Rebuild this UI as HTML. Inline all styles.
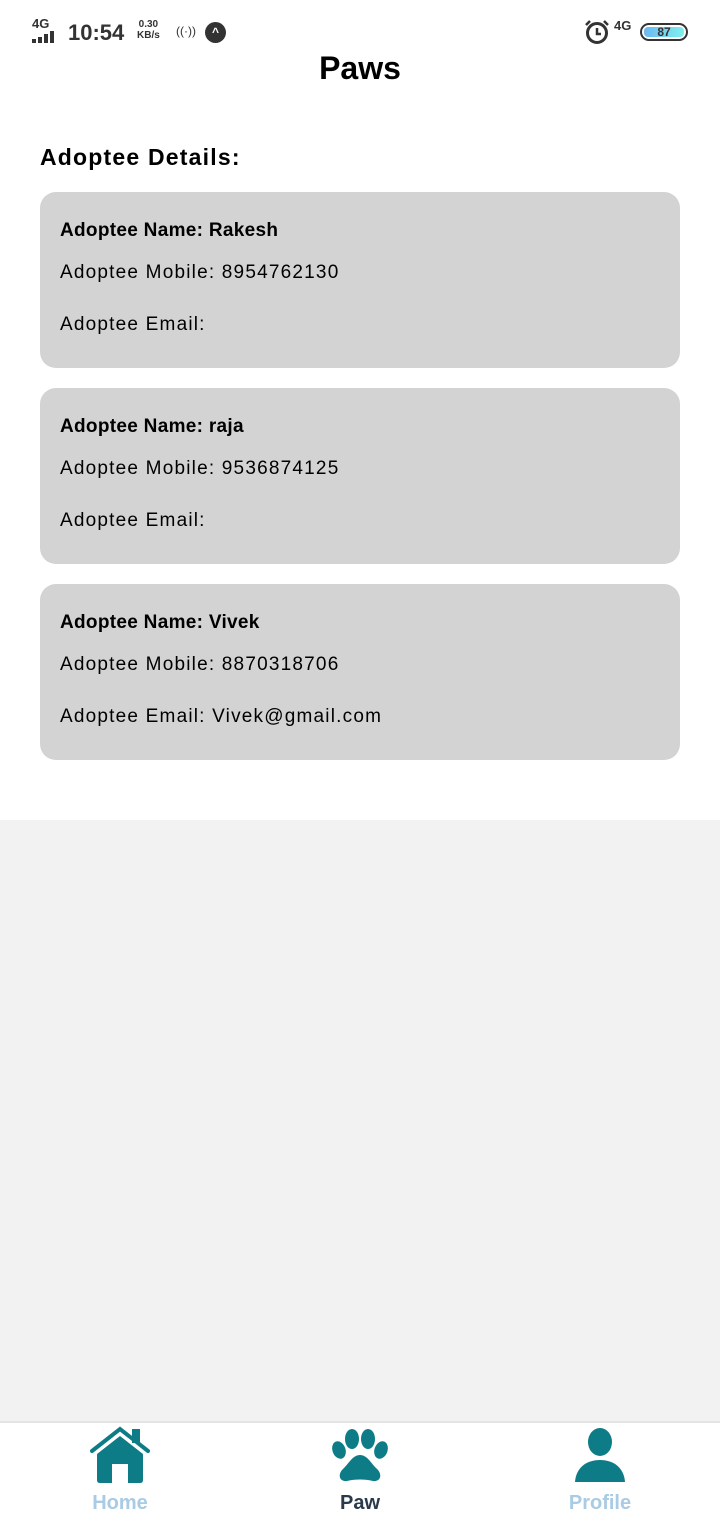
<!DOCTYPE html>
<html><head><meta charset="utf-8"><style>
*{margin:0;padding:0;box-sizing:border-box}
body{width:720px;height:1520px;position:relative;background:#fff;font-family:"Liberation Sans",sans-serif;overflow:hidden}
.abs{position:absolute}
.card{position:absolute;left:40px;width:640px;height:176px;background:#d3d3d3;border-radius:16px}
.card div{position:absolute;left:20px;font-size:19px;color:#000;letter-spacing:1.2px}
.card div.b{font-weight:bold;letter-spacing:0.3px}
</style></head><body>
<div class="abs" style="left:32px;top:16px;font-size:13px;font-weight:bold;color:#333">4G</div>
<div class="abs" style="left:32px;top:31px;width:26px;height:12px">
<span class="abs" style="left:0;top:8px;width:4px;height:4px;background:#333"></span>
<span class="abs" style="left:6px;top:6px;width:4px;height:6px;background:#333"></span>
<span class="abs" style="left:12px;top:3px;width:4px;height:9px;background:#333"></span>
<span class="abs" style="left:18px;top:0;width:4px;height:12px;background:#333"></span></div>
<div class="abs" style="left:68px;top:20px;font-size:22px;font-weight:bold;color:#333">10:54</div>
<div class="abs" style="left:137px;top:19px;font-size:10px;font-weight:bold;color:#333;line-height:11px;text-align:center">0.30<br>KB/s</div>
<div class="abs" style="left:176px;top:24px;font-size:12px;color:#333">((·))</div>
<div class="abs" style="left:205px;top:22px;width:21px;height:21px;border-radius:50%;background:#333;color:#fff;font-size:12px;text-align:center;line-height:21px;font-weight:bold">^</div>
<svg class="abs" style="left:584px;top:19px" width="26" height="26" viewBox="0 0 26 26"><circle cx="13" cy="14" r="9.5" stroke="#333" stroke-width="3" fill="none"/><path d="M13 9V15H17" stroke="#333" stroke-width="2.5" fill="none"/><path d="M2 6L6 2M24 6L20 2" stroke="#333" stroke-width="2.5"/></svg>
<div class="abs" style="left:614px;top:18px;font-size:13px;font-weight:bold;color:#333">4G</div>
<div class="abs" style="left:640px;top:23px;width:48px;height:18px;border:2px solid #333;border-radius:9px;overflow:hidden"><div style="position:absolute;left:2px;top:2px;width:40px;height:10px;border-radius:4px;background:linear-gradient(90deg,#6cb8f0,#7ef0ee)"></div><div style="position:absolute;left:0;width:44px;top:0;text-align:center;font-size:12px;font-weight:bold;color:#333;line-height:14px">87</div></div>
<div class="abs" style="left:0;width:720px;top:50px;text-align:center;font-size:32px;font-weight:bold;color:#000">Paws</div>
<div class="abs" style="left:40px;top:144px;font-size:23px;font-weight:bold;letter-spacing:1.2px">Adoptee Details:</div>
<div class="card" style="top:192px"><div class="b" style="top:28px">Adoptee Name: Rakesh</div><div style="top:70px">Adoptee Mobile: 8954762130</div><div style="top:122px">Adoptee Email:</div></div>
<div class="card" style="top:388px"><div class="b" style="top:28px">Adoptee Name: raja</div><div style="top:70px">Adoptee Mobile: 9536874125</div><div style="top:122px">Adoptee Email:</div></div>
<div class="card" style="top:584px"><div class="b" style="top:28px">Adoptee Name: Vivek</div><div style="top:70px">Adoptee Mobile: 8870318706</div><div style="top:122px">Adoptee Email: Vivek@gmail.com</div></div>
<div class="abs" style="left:0;top:820px;width:720px;height:601px;background:#f2f2f2"></div>
<div class="abs" style="left:0;top:1421px;width:720px;height:2px;background:#e4e4e4"></div>
<svg class="abs" style="left:88px;top:1426px" width="64" height="58" viewBox="0 0 64 58">
<path d="M4 25 L32 3 L60 25" stroke="#0e7c86" stroke-width="4" fill="none" stroke-linecap="round"/>
<rect x="44" y="3" width="8" height="14" fill="#0e7c86"/>
<path d="M9 28 L32 10 L55 28 V54 Q55 57 52 57 H40 V38 H24 V57 H12 Q9 57 9 54Z" fill="#0e7c86"/>
</svg>
<svg class="abs" style="left:330px;top:1428px" width="60" height="54" viewBox="0 0 60 54">
<g fill="#0e7c86"><ellipse cx="9" cy="22" rx="6.5" ry="9" transform="rotate(-20 9 22)"/><ellipse cx="22" cy="11" rx="7" ry="10"/><ellipse cx="38" cy="11" rx="7" ry="10"/><ellipse cx="51" cy="22" rx="6.5" ry="9" transform="rotate(20 51 22)"/>
<path d="M30 27 C23 27 19 35 14 40 C7 46 9 54 17 53 C24 51 36 51 43 53 C51 54 53 46 46 40 C41 35 37 27 30 27Z"/></g></svg>
<svg class="abs" style="left:572px;top:1428px" width="56" height="56" viewBox="0 0 56 56">
<g fill="#0e7c86"><ellipse cx="28" cy="14" rx="12" ry="14"/><path d="M3 54 C4 40 14 32 28 32 C42 32 52 40 53 54Z"/></g></svg>
<div class="abs" style="left:60px;width:120px;top:1492px;text-align:center;font-size:20px;font-weight:bold;color:#a9cbe3">Home</div>
<div class="abs" style="left:300px;width:120px;top:1492px;text-align:center;font-size:20px;font-weight:bold;color:#2a3a4c">Paw</div>
<div class="abs" style="left:540px;width:120px;top:1492px;text-align:center;font-size:20px;font-weight:bold;color:#a9cbe3">Profile</div>
</body></html>
